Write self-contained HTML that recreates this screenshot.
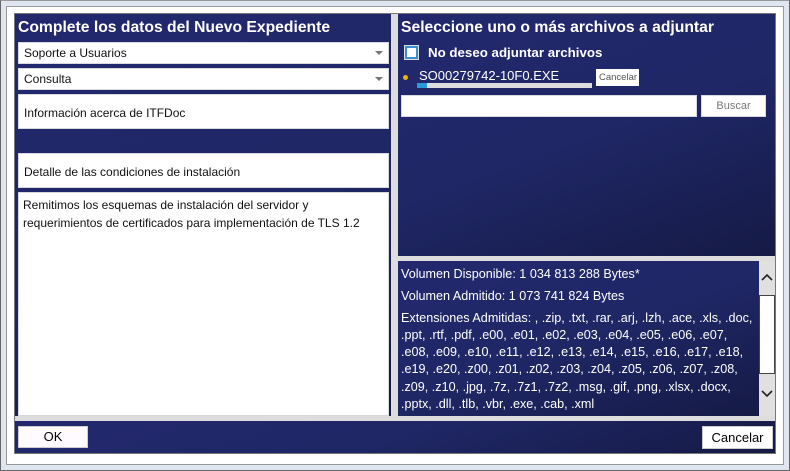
<!DOCTYPE html>
<html><head><style>
*{margin:0;padding:0;box-sizing:border-box}
body{width:790px;height:471px;background:#dfe6f0;font-family:"Segoe UI","Liberation Sans",sans-serif;position:relative;overflow:hidden}
.a{position:absolute}
.bg{background:linear-gradient(160deg,#23286e 0%,#1f2766 50%,#151a45 100%)}
.w{background:#fff;border:1px solid #d8d8e0}
.t{color:#fff;font-weight:bold;font-size:15.7px;white-space:nowrap}
.s{font-size:12px;color:#111;white-space:nowrap}
.arr{position:absolute;right:5px;top:8px;width:0;height:0;border-left:4px solid transparent;border-right:4px solid transparent;border-top:4px solid #777}
.info{color:#fff;font-size:12.6px;line-height:17.3px}
</style></head><body>
<div class="a" style="left:0;top:0;width:790px;height:471px;border:1px solid #666;border-top-color:#999"></div>
<div class="a" style="left:6px;top:6px;width:778px;height:459px;background:#fff;border:1px solid #999"></div>
<div class="a" style="left:14px;top:13px;width:762px;height:441px;background:#ddd;border:1px solid #777"></div>
<div class="a bg" style="left:15px;top:14px;width:376px;height:402px"></div>
<div class="a bg" style="left:398px;top:14px;width:377px;height:242px"></div>
<div class="a bg" style="left:398px;top:261px;width:361px;height:155px"></div>
<div class="a bg" style="left:15px;top:421px;width:760px;height:32px"></div>

<div class="a t" style="left:18px;top:19px">Complete los datos del Nuevo Expediente</div>
<div class="a w s" style="left:18px;top:42px;width:371px;height:22px;padding:3px 5px">Soporte a Usuarios<div class="arr"></div></div>
<div class="a w s" style="left:18px;top:68px;width:371px;height:22px;padding:3px 5px">Consulta<div class="arr"></div></div>
<div class="a w s" style="left:18px;top:94px;width:371px;height:35px;padding:11px 5px">Información acerca de ITFDoc</div>
<div class="a w s" style="left:18px;top:153px;width:371px;height:35px;padding:11px 5px">Detalle de las condiciones de instalación</div>
<div class="a w s" style="left:18px;top:192px;width:371px;height:224px;padding:3px 4px;line-height:18px;white-space:normal">Remitimos los esquemas de instalación del servidor y requerimientos de certificados para implementación de TLS 1.2</div>

<div class="a t" style="left:401px;top:19px">Seleccione uno o más archivos a adjuntar</div>
<div class="a" style="left:405px;top:46px;width:13px;height:13px;background:#fff;border:2px solid #3a8fd0;outline:1px solid #ddd"></div>
<div class="a t" style="left:428px;top:45px;font-size:13.3px">No deseo adjuntar archivos</div>
<div class="a" style="left:403px;top:75px;width:5px;height:5px;border-radius:50%;background:#f0b400"></div>
<div class="a" style="left:419px;top:68px;color:#fff;font-size:13px;white-space:nowrap">SO00279742-10F0.EXE</div>
<div class="a" style="left:417px;top:83px;width:175px;height:5px;background:#ddd"><div style="width:10px;height:5px;background:#2b9ad8"></div></div>
<div class="a" style="left:596px;top:69px;width:43px;height:17px;background:#fff;color:#555;font-size:9.5px;padding:3px 3px">Cancelar</div>
<div class="a w" style="left:401px;top:95px;width:296px;height:22px"></div>
<div class="a w" style="left:701px;top:95px;width:65px;height:22px;color:#777;font-size:11px;text-align:center;padding-top:4px">Buscar</div>

<div class="a info" style="left:401px;top:266px;width:358px">
<div style="margin-bottom:5px">Volumen Disponible: 1 034 813 288 Bytes*</div>
<div style="margin-bottom:4px">Volumen Admitido: 1 073 741 824 Bytes</div>
<div>Extensiones Admitidas: , .zip, .txt, .rar, .arj, .lzh, .ace, .xls, .doc,<br>.ppt, .rtf, .pdf, .e00, .e01, .e02, .e03, .e04, .e05, .e06, .e07,<br>.e08, .e09, .e10, .e11, .e12, .e13, .e14, .e15, .e16, .e17, .e18,<br>.e19, .e20, .z00, .z01, .z02, .z03, .z04, .z05, .z06, .z07, .z08,<br>.z09, .z10, .jpg, .7z, .7z1, .7z2, .msg, .gif, .png, .xlsx, .docx,<br>.pptx, .dll, .tlb, .vbr, .exe, .cab, .xml</div>
</div>
<div class="a" style="left:759px;top:261px;width:16px;height:155px;background:#e0e0e0"></div>
<div class="a" style="left:759px;top:295px;width:16px;height:79px;background:#fff;border:1px solid #444"></div>
<svg class="a" style="left:759px;top:272px" width="16" height="10"><path d="M3 8 L8 3 L13 8" stroke="#222" stroke-width="1.6" fill="none"/></svg>
<svg class="a" style="left:759px;top:389px" width="16" height="10"><path d="M3 2 L8 7 L13 2" stroke="#222" stroke-width="1.6" fill="none"/></svg>

<div class="a" style="left:18px;top:426px;width:70px;height:22px;background:#fffbff;border:1px solid #ccc;font-size:13px;text-align:center;padding-top:2px">OK</div>
<div class="a" style="left:702px;top:426px;width:71px;height:23px;background:#fff;border:1px solid #ccc;font-size:13px;text-align:center;padding-top:3px">Cancelar</div>
</body></html>
